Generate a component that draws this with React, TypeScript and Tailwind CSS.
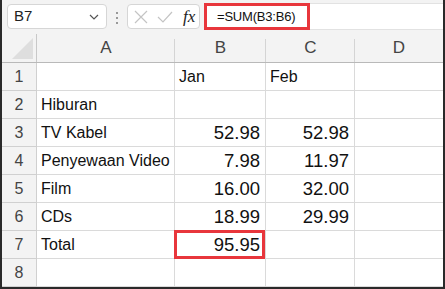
import React from "react";

const font = { fontFamily: '"Liberation Sans", Arial, sans-serif' };

type Row = { n: number; a?: string; b?: string; c?: string; hl?: boolean };

const rows: Row[] = [
  { n: 1, b: "Jan", c: "Feb" },
  { n: 2, a: "Hiburan" },
  { n: 3, a: "TV Kabel", b: "52.98", c: "52.98" },
  { n: 4, a: "Penyewaan Video", b: "7.98", c: "11.97" },
  { n: 5, a: "Film", b: "16.00", c: "32.00" },
  { n: 6, a: "CDs", b: "18.99", c: "29.99" },
  { n: 7, a: "Total", b: "95.95", hl: true },
  { n: 8 },
];

const isNum = (s?: string) => !!s && /^[0-9.]+$/.test(s);

function Cell({ v, w, hl }: { v?: string; w: string; hl?: boolean }) {
  const num = isNum(v);
  return (
    <div
      className={`relative ${w} h-full border-r border-b border-[#dadada] bg-white flex items-center ${
        num ? "justify-end pr-[5px] text-[18.5px]" : "justify-start pl-[4px] text-[16px]"
      } text-[#111] whitespace-nowrap`}
    >
      {v}
      {hl && (
        <div className="absolute -left-[1px] -top-[1px] -right-[0px] -bottom-[1px] border-[3px] border-[#e8363c]" />
      )}
    </div>
  );
}

export default function App() {
  return (
    <div
      className="w-[445px] h-[289px] bg-[#f3f3f3] border-x-2 border-b-2 border-[#2a2a2a] overflow-hidden flex flex-col"
      style={font}
    >
      {/* toolbar */}
      <div className="h-[34px] flex items-start pt-[4px] relative">
        <div className="ml-[5px] w-[100px] h-[25px] bg-white border border-[#d6d6d6] rounded-[4px] flex items-center justify-between pl-[6px] pr-[7px]">
          <span className="text-[15px] text-[#222]">B7</span>
          <svg width="10" height="6" viewBox="0 0 10 6">
            <path d="M1 1 L5 5 L9 1" fill="none" stroke="#555" strokeWidth="1.2" />
          </svg>
        </div>
        <div className="ml-[9px] mt-[8px] flex flex-col gap-[3px]">
          <div className="w-[2px] h-[2px] bg-[#999]" />
          <div className="w-[2px] h-[2px] bg-[#999]" />
          <div className="w-[2px] h-[2px] bg-[#999]" />
        </div>
        <div className="ml-[9px] w-[73px] h-[25px] bg-white border border-[#d6d6d6] rounded-[4px] flex items-center pl-[6px]">
          <svg width="14" height="14" viewBox="0 0 14 14">
            <path d="M1 1 L13 13 M13 1 L1 13" stroke="#c4c4c4" strokeWidth="1.2" />
          </svg>
          <svg className="ml-[9px]" width="16" height="12" viewBox="0 0 16 12">
            <path d="M1 6 L6 11 L15 1" fill="none" stroke="#c4c4c4" strokeWidth="1.2" />
          </svg>
          <span
            className="ml-[10px] text-[17px] italic text-[#222]"
            style={{ fontFamily: '"Liberation Serif", "Times New Roman", serif' }}
          >
            fx
          </span>
        </div>
        <div className="ml-[4px] flex-1 h-[27px] -mt-[1px] bg-white border-y border-[#e2e2e2] relative">
          <div className="absolute left-0 -top-[1px] w-[106px] h-[27px] border-[3px] border-[#e8363c] flex items-center pl-[10px]">
            <span className="text-[13px] tracking-[-0.2px] text-[#111]">=SUM(B3:B6)</span>
          </div>
        </div>
      </div>
      {/* column header */}
      <div className="h-[29px] flex border-b border-[#b9b9b9]">
        <div className="w-[35px] h-full border-r border-[#c8c8c8] relative flex items-end justify-end">
          <svg className="absolute right-[3px] bottom-[3px]" width="21" height="21" viewBox="0 0 21 21">
            <path d="M21 0 L21 21 L0 21 Z" fill="#dedede" />
          </svg>
        </div>
        {[
          { l: "A", w: "w-[138px]" },
          { l: "B", w: "w-[91px]" },
          { l: "C", w: "w-[89px]" },
          { l: "D", w: "flex-1" },
        ].map((c, i) => (
          <div key={c.l} className={`${c.w} h-full relative flex items-center justify-center text-[17px] text-[#444]`}>
            {c.l}
            {i < 3 && <div className="absolute right-0 top-[5px] bottom-0 w-px bg-[#d4d4d4]" />}
          </div>
        ))}
      </div>
      {/* rows */}
      {rows.map((r) => (
        <div key={r.n} className="h-[28px] flex">
          <div className="w-[35px] h-full border-r border-b border-[#d0d0d0] bg-[#f3f3f3] flex items-center justify-center text-[16px] text-[#444]">
            {r.n}
          </div>
          <Cell v={r.a} w="w-[138px]" />
          <Cell v={r.b} w="w-[91px]" hl={r.hl} />
          <Cell v={r.c} w="w-[89px]" />
          <div className="flex-1 h-full border-b border-[#dadada] bg-white" />
        </div>
      ))}
    </div>
  );
}
